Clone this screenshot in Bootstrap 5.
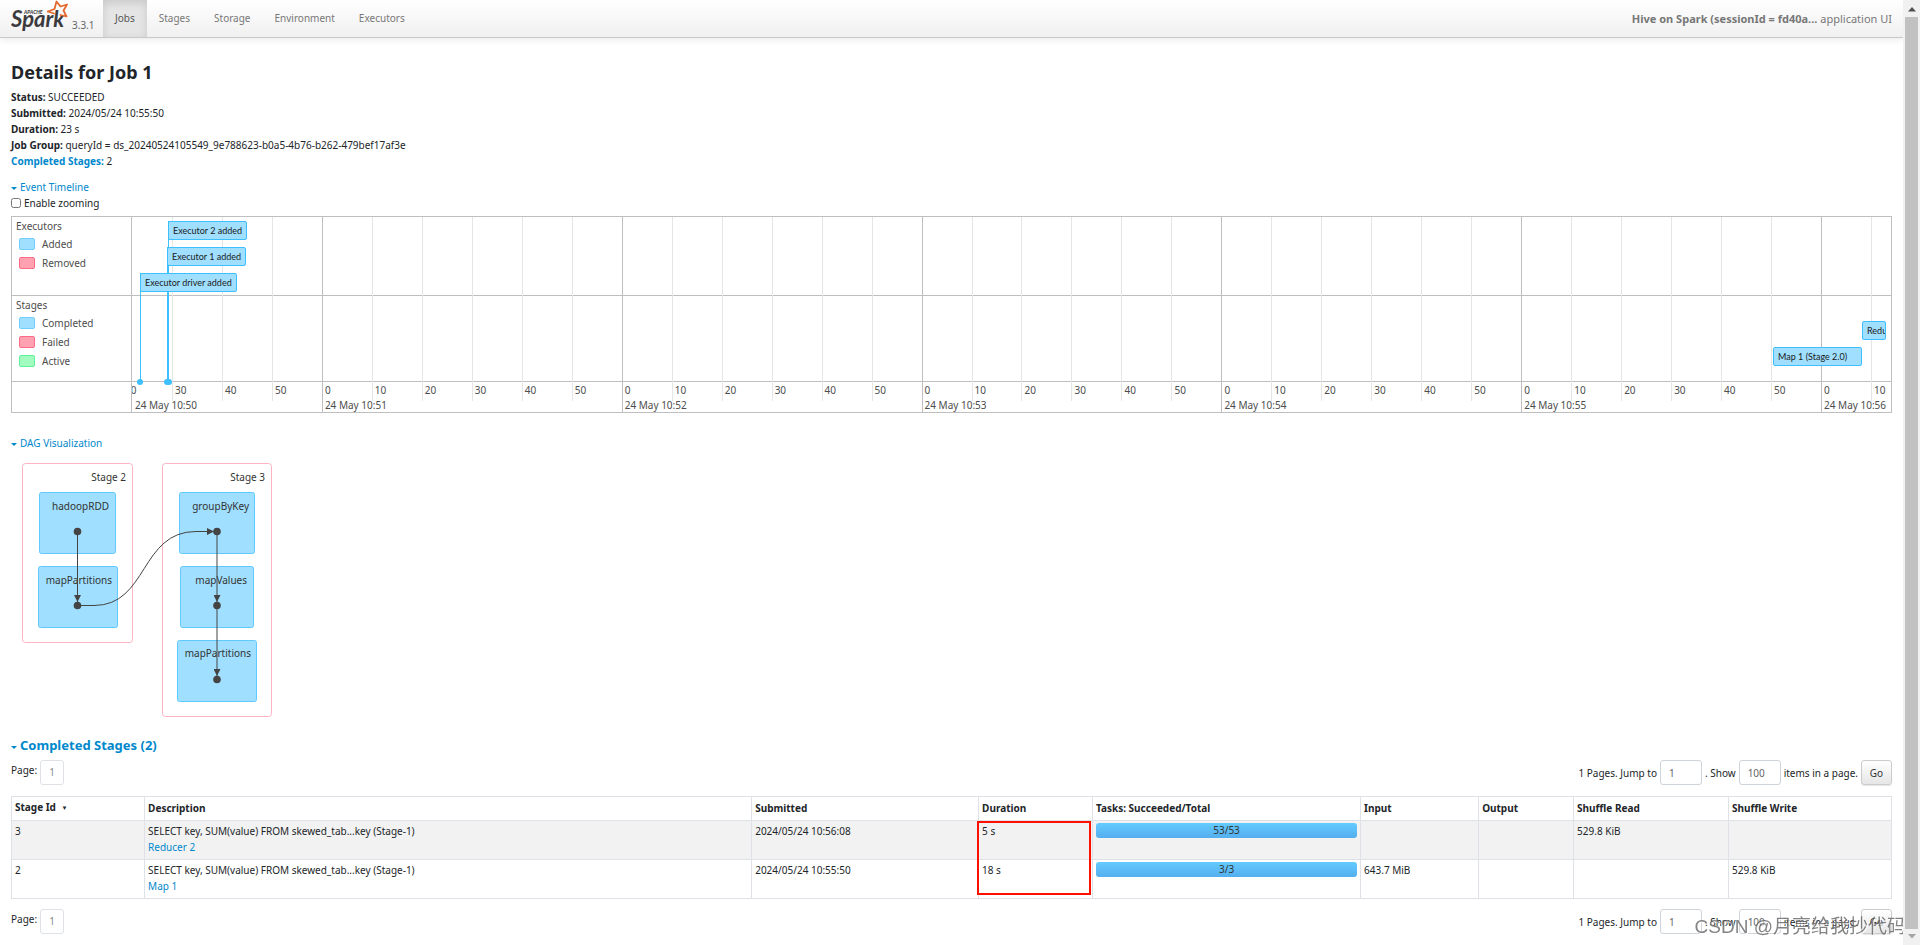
<!DOCTYPE html>
<html lang="en">
<head>
<meta charset="utf-8">
<meta name="viewport" content="width=device-width, initial-scale=1">
<title>Spark Jobs - Details for Job 1</title>
<link rel="stylesheet" href="https://cdn.jsdelivr.net/npm/bootstrap@5.3.0/dist/css/bootstrap.min.css">
<style>
body{font:10px/16px "Noto Sans","Open Sans",sans-serif;color:#212529;background:#fff}
a{color:#08c;text-decoration:none}
.spark-nav{min-height:38px;padding:0 11px 0 11px;background:linear-gradient(#fff,#f0f0f0);border-bottom:1px solid #c9c9c9;box-shadow:0 1px 8px rgba(0,0,0,.1)}
.spark-nav .nav-link{padding:10px 12px 11px;color:#777;font-size:10px}
.spark-nav .nav-link.active{color:#555;background:#e5e5e5;box-shadow:inset 0 3px 8px rgba(0,0,0,.125)}
.brand-box{width:92px}
.version{font-size:10px;color:#666;padding-top:17px}
.app-name{color:#777;font-size:11px}
.page-body{padding:24px 11px 0 11px}
h1{font-size:18px;line-height:20px;font-weight:700;margin:0 0 7px}
h2{font-size:13px;line-height:20px;font-weight:700;margin:0}
.caret{display:inline-block;border:3px solid transparent;border-top-color:#08c;border-bottom:0;margin-right:3px;vertical-align:1px}
.zoom-check{width:10px;height:10px;margin:0}
/* event timeline */
.timeline-head{margin-top:10px}
.dag-head{margin-top:22px;margin-bottom:2px}
.zoom-row{gap:3px}
.tl{grid-template-columns:120px minmax(0,1fr);grid-template-rows:79px 86px 31px;margin-top:5px;border:1px solid #bfbfbf;border-bottom:0;color:#4d4d4d;position:relative}
.tl-side{border-right:1px solid #bfbfbf;border-bottom:1px solid #bfbfbf;padding:1px 4px}
.tl-lane{border-bottom:1px solid #bfbfbf}
.tl-key{height:19px;padding-left:3px;gap:7px}
.tl-key i{width:16px;height:12px;border:1px solid #6fcfff;border-radius:2px;background:#a0dfff}
.tl-key i.bad{border-color:#ff6b86;background:#ffa1b0}
.tl-key i.run{border-color:#5ff09a;background:#a2fcc0}
.tl-plot{position:absolute;left:120px;right:0;top:0;bottom:0;overflow:hidden}
.tl-plot>*{position:absolute}
.g-minor{top:0;height:184px;border-left:1px solid #e5e5e5}
.g-major{top:0;bottom:0;border-left:1px solid #bfbfbf}
.t-minor{top:165px;padding-left:3px}
.t-major{top:180px;padding-left:3px;white-space:nowrap}
.ev{height:19px;border:1px solid #3ebfff;border-radius:2px;background:#a0dfff;color:#1a1a1a;font-family:Lato,sans-serif;font-size:9px;line-height:17px;padding:0 4px;white-space:nowrap;overflow:hidden}
.stem{bottom:31px;border-left:1px solid #3ebfff}
.dot{width:6px;height:6px;margin-left:-3px;bottom:28px;border-radius:3px;background:#3ebfff}
.lv1{top:4px}.lv2{top:30px}.lv3{top:56px}.lv4{top:104px}.lv5{top:130px}
/* DAG */
.dag{display:block}
.dag .stage{fill:#fff;stroke:#ffb3c2}
.dag .op{fill:#a0dfff;stroke:#5fcaff}
.dag text{font-size:10px;fill:#333;text-anchor:end}
.dag .link{fill:none;stroke:#444}
.dag .node,.dag .head{fill:#444}
/* stage table */
.pager-no{width:24px;height:25px;border:1px solid #dee2e6;border-radius:3px;color:#888;line-height:23px;text-align:center;display:block}
.pager-in{width:42px;height:25px;border:1px solid #ced4da;border-radius:3px;color:#666;font-size:10px;padding:0 8px}
.btn-go{width:31px;height:25px;border:1px solid #ccc;border-radius:3px;background:linear-gradient(#fff,#e6e6e6);color:#333;font-size:10px;padding:0;box-shadow:0 1px 1px rgba(0,0,0,.1)}
.pager{line-height:20px;padding:5px 0 11px}
.pager-end{padding:10px 0 0}
.pager-gap{gap:3px}
.stages{font-size:10px;table-layout:fixed;border-color:#dee2e6}
.stages>:not(caption)>*>*{padding:2px 3px 4px;color:#212529}
.stages tbody tr:nth-child(odd)>td{background:#f2f2f2}
.task-bar{height:15px;border-radius:3px;background:linear-gradient(#64cbff,#54aeef);color:#333;text-align:center;line-height:15px}
.sort-mark{font-size:6px;vertical-align:1px;margin-left:3px}
.call-out{position:absolute;z-index:2;left:-2px;right:1px;top:0;height:196%;border:2px solid #ff0f00}
/* scroll bar and page mark */
.bar-track{width:17px;height:100vh;background:#f1f1f1;padding:7px 2px 6px}
.bar-thumb{width:13px;background:#c1c1c1;margin:5px 0 5px}
.page-mark{position:fixed;right:14px;bottom:3px;z-index:3;font:19px/30px "Liberation Sans","Noto Sans CJK SC",sans-serif;color:rgba(90,90,90,.75);text-shadow:1px 1px 1px #fff;pointer-events:none}
</style>
<script src="https://cdn.jsdelivr.net/npm/bootstrap@5.3.0/dist/js/bootstrap.bundle.min.js"></script>
</head>
<body class="d-flex">
<div class="flex-grow-1 overflow-hidden">
  <nav class="spark-nav d-flex align-items-stretch">
    <a class="brand-box d-flex" href="#">
      <svg width="61" height="36" viewBox="0 0 61 36" aria-label="Apache Spark">
        <text x="13" y="14" font-family="Lato" font-weight="900" font-style="italic" font-size="5" fill="#444">APACHE</text>
        <text x="0" y="27" font-family="Lato" font-weight="700" font-style="italic" font-size="22" fill="#3c3a3e">Spark</text>
        <path d="M37 11.500L43.500 9L45.500 1.500L49.500 6.500L56 4.500L52.500 10.500L55.500 16.500L49.500 15" fill="none" stroke="#e2682c" stroke-width="1.800" stroke-linejoin="round" stroke-linecap="round"/>
        <path d="M37 11.500L43 13.500" stroke="#e2682c" stroke-width="1.800" stroke-linecap="round"/>
      </svg>
      <span class="version">3.3.1</span>
    </a>
    <ul class="nav flex-grow-1">
      <li class="nav-item"><a class="nav-link active" href="#">Jobs</a></li>
      <li class="nav-item"><a class="nav-link" href="#">Stages</a></li>
      <li class="nav-item"><a class="nav-link" href="#">Storage</a></li>
      <li class="nav-item"><a class="nav-link" href="#">Environment</a></li>
      <li class="nav-item"><a class="nav-link" href="#">Executors</a></li>
    </ul>
    <span class="app-name align-self-center"><strong>Hive on Spark (sessionId = fd40a...</strong> application UI</span>
  </nav>
  <main class="page-body">
    <h1>Details for Job 1</h1>
    <ul class="list-unstyled mb-0">
      <li><strong>Status:</strong> SUCCEEDED</li>
      <li><strong>Submitted:</strong> 2024/05/24 10:55:50</li>
      <li><strong>Duration:</strong> 23 s</li>
      <li><strong>Job Group:</strong> queryId = ds_20240524105549_9e788623-b0a5-4b76-b262-479bef17af3e</li>
      <li><a href="#completed"><strong>Completed Stages:</strong></a> 2</li>
    </ul>
    <div class="timeline-head"><a href="#"><span class="caret"></span>Event Timeline</a></div>
    <div class="zoom-row d-flex align-items-center">
      <input class="zoom-check" type="checkbox" id="zoom"><label for="zoom">Enable zooming</label>
    </div>
    <div class="tl d-grid">
      <div class="tl-side">Executors
        <div class="tl-key d-flex align-items-center"><i></i>Added</div>
        <div class="tl-key d-flex align-items-center"><i class="bad"></i>Removed</div>
      </div>
      <div class="tl-lane"></div>
      <div class="tl-side">Stages
        <div class="tl-key d-flex align-items-center"><i></i>Completed</div>
        <div class="tl-key d-flex align-items-center"><i class="bad"></i>Failed</div>
        <div class="tl-key d-flex align-items-center"><i class="run"></i>Active</div>
      </div>
      <div class="tl-lane"></div>
      <div class="tl-side"></div>
      <div class="tl-lane"></div>
      <div class="tl-plot" id="plot"></div>
    </div>
    <div class="dag-head"><a href="#"><span class="caret"></span>DAG Visualization</a></div>
    <svg class="dag" width="290" height="282" viewBox="11 453 290 282">
      <defs><marker id="tip" viewBox="0 0 8 8" refX="8" refY="4" markerWidth="7" markerHeight="7" markerUnits="userSpaceOnUse" orient="auto"><path class="head" d="M0 0L8 4L0 8z"/></marker></defs>
      <rect class="stage" x="22.500" y="463.500" width="110" height="179" rx="3"/>
      <rect class="stage" x="162.500" y="463.500" width="109" height="253" rx="3"/>
      <rect class="op" x="39.500" y="492.500" width="76" height="61" rx="2"/>
      <rect class="op" x="38.500" y="566.500" width="79" height="61" rx="2"/>
      <rect class="op" x="179.500" y="492.500" width="75" height="61" rx="2"/>
      <rect class="op" x="180.500" y="566.500" width="73" height="61" rx="2"/>
      <rect class="op" x="177.500" y="640.500" width="79" height="61" rx="2"/>
      <text x="126" y="481">Stage 2</text><text x="265" y="481">Stage 3</text>
      <text x="109" y="510">hadoopRDD</text><text x="112" y="584">mapPartitions</text>
      <text x="249" y="510">groupByKey</text><text x="247" y="584">mapValues</text><text x="251" y="657">mapPartitions</text>
      <path class="link" marker-end="url(#tip)" d="M77.500 532V602"/>
      <path class="link" marker-end="url(#tip)" d="M217 532V602"/>
      <path class="link" marker-end="url(#tip)" d="M217 606V676"/>
      <path class="link" marker-end="url(#tip)" d="M77.500 605.500H94C148 605.500 140 531.500 196 531.500H214"/>
      <g class="node"><circle cx="77.500" cy="531.500" r="3.800"/><circle cx="77.500" cy="605.500" r="3.800"/><circle cx="217" cy="531.500" r="3.800"/><circle cx="217" cy="605.500" r="3.800"/><circle cx="217" cy="679.500" r="3.800"/></g>
    </svg>
    <h2 id="completed"><a href="#completed"><span class="caret"></span>Completed Stages (2)</a></h2>
    <div class="pager d-flex justify-content-between">
      <div class="d-flex pager-gap"><span>Page:</span><a class="pager-no" href="#">1</a></div>
      <form class="d-flex align-items-center pager-gap">
        <label for="jump1">1 Pages. Jump to</label><input class="pager-in" id="jump1" value="1">
        <label for="size1">. Show</label><input class="pager-in" id="size1" value="100"><span>items in a page.</span>
        <button class="btn-go" type="button">Go</button>
      </form>
    </div>
    <table class="table table-bordered stages mb-0">
      <colgroup><col style="width:7.08%"><col style="width:32.29%"><col style="width:12.07%"><col style="width:6.06%"><col style="width:14.26%"><col style="width:6.28%"><col style="width:5.05%"><col style="width:8.24%"><col style="width:8.67%"></colgroup>
      <thead><tr><th>Stage Id <span class="sort-mark">▼</span></th><th>Description</th><th>Submitted</th><th>Duration</th><th>Tasks: Succeeded/Total</th><th>Input</th><th>Output</th><th>Shuffle Read</th><th>Shuffle Write</th></tr></thead>
      <tbody>
        <tr><td>3</td><td>SELECT key, SUM(value) FROM skewed_tab...key (Stage-1)<br><a href="#">Reducer 2</a></td><td>2024/05/24 10:56:08</td><td class="position-relative">5 s<span class="call-out"></span></td><td><div class="task-bar">53/53</div></td><td></td><td></td><td>529.8 KiB</td><td></td></tr>
        <tr><td>2</td><td>SELECT key, SUM(value) FROM skewed_tab...key (Stage-1)<br><a href="#">Map 1</a></td><td>2024/05/24 10:55:50</td><td>18 s</td><td><div class="task-bar">3/3</div></td><td>643.7 MiB</td><td></td><td></td><td>529.8 KiB</td></tr>
      </tbody>
    </table>
    <div class="pager pager-end d-flex justify-content-between">
      <div class="d-flex pager-gap"><span>Page:</span><a class="pager-no" href="#">1</a></div>
      <form class="d-flex align-items-center pager-gap">
        <label for="jump2">1 Pages. Jump to</label><input class="pager-in" id="jump2" value="1">
        <label for="size2">. Show</label><input class="pager-in" id="size2" value="100"><span>items in a page.</span>
        <button class="btn-go" type="button">Go</button>
      </form>
    </div>
  </main>
</div>
<div class="bar-track d-flex flex-column align-items-center flex-shrink-0 sticky-top" aria-hidden="true">
  <svg width="8" height="5"><path d="M0 4.500L4 0L8 4.500z" fill="#505050"/></svg>
  <div class="bar-thumb flex-grow-1"></div>
  <svg width="8" height="5"><path d="M0 0L4 4.500L8 0z" fill="#a3a3a3"/></svg>
</div>
<div class="page-mark">CSDN @月亮给我抄代码</div>
<script>
// Times are seconds after 10:50:00; the plot shows 22 s to 374 s.
const plot = document.getElementById('plot'), FROM = 22, SPAN = 352;
const pct = s => (s / SPAN * 100) + '%';
function put(cls, t, text, end) {
  const el = document.createElement('div');
  el.className = cls;
  el.style.left = pct(t - FROM);
  if (end) el.style.width = pct(end - t);
  el.textContent = text || '';
  plot.append(el);
}
for (let t = 30; t <= 370; t += 10) {
  const major = t % 60 === 0;
  put(major ? 'g-major' : 'g-minor', t);
  put('t-minor', t, String(t % 60));
  if (major) put('t-major', t, '24 May 10:5' + t / 60);
}
put('t-minor', 20, '20');
put('t-major', 22, '24 May 10:50');
put('stem lv1', 29.3); put('stem lv2', 29); put('stem lv3', 23.6);
put('dot', 29.4); put('dot', 29); put('dot', 23.7);
put('ev lv1', 29.2, 'Executor 2 added');
put('ev lv2', 29, 'Executor 1 added');
put('ev lv3', 23.6, 'Executor driver added');
put('ev lv4', 368.2, 'Reducer 2 (Stage 3.0)', 373);
put('ev lv5', 350.4, 'Map 1 (Stage 2.0)', 368.2);
</script>
</body>
</html>
